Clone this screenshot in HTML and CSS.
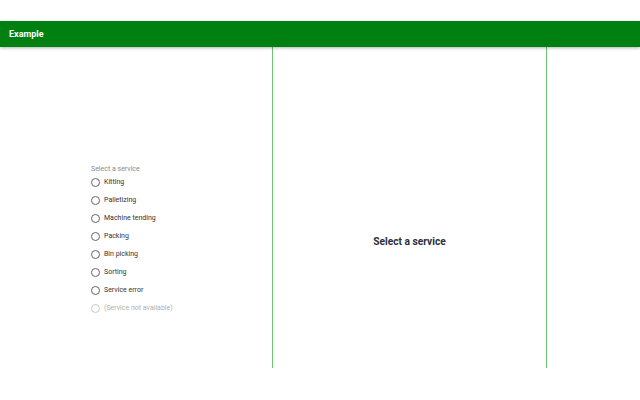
FILE: index.html
```html
<!DOCTYPE html>
<html>
<head>
<meta charset="utf-8">
<link rel="stylesheet" href="styles.css">
</head>
<body>
<div class="top-gap"></div>
<header class="appbar">Example</header>
<main class="panels">
  <section class="panel left">
    <div class="group">
      <div class="group-label">Select a service</div>
      <label class="opt"><span class="radio"></span>Kitting</label>
      <label class="opt"><span class="radio"></span>Palletizing</label>
      <label class="opt"><span class="radio"></span>Machine tending</label>
      <label class="opt"><span class="radio"></span>Packing</label>
      <label class="opt"><span class="radio"></span>Bin picking</label>
      <label class="opt"><span class="radio"></span>Sorting</label>
      <label class="opt"><span class="radio"></span>Service error</label>
      <label class="opt disabled"><span class="radio"></span>(Service not available)</label>
    </div>
  </section>
  <section class="panel middle">
    <div class="placeholder">Select a service</div>
  </section>
  <section class="panel right"></section>
</main>
</body>
</html>
```

FILE: styles.css
```css
html, body {
  margin: 0;
  padding: 0;
  background: #ffffff;
  font-family: Roboto, "Liberation Sans", sans-serif;
}
.top-gap {
  height: 21px;
}
.appbar {
  height: 26px;
  background: #008010;
  color: #ffffff;
  font-weight: 700;
  font-size: 9px;
  line-height: 26px;
  padding-left: 9px;
  box-shadow: 0 1px 3px rgba(0, 0, 0, 0.3);
  position: relative;
  z-index: 1;
}
.panels {
  display: flex;
  height: 321px;
}
.panel {
  box-sizing: border-box;
  height: 100%;
}
.left {
  width: 273px;
  border-right: 1px solid #70c274;
  padding-left: 91px;
  padding-top: 118px;
}
.middle {
  width: 274px;
  border-right: 1px solid #70c274;
  display: flex;
  justify-content: center;
  padding-top: 189px;
}
.right {
  flex: 1;
}
.group-label {
  font-size: 7px;
  color: #8a8a8a;
  line-height: 8px;
}
.opt {
  display: flex;
  align-items: center;
  height: 18px;
  font-size: 7px;
  color: #333333;
}
.radio {
  box-sizing: border-box;
  width: 9px;
  height: 9px;
  border: 1px solid #666666;
  border-radius: 50%;
  margin-right: 4px;
}
.opt.disabled {
  color: #b0b0b0;
}
.opt.disabled .radio {
  border-color: #c8c8c8;
}
.placeholder {
  font-weight: 700;
  font-size: 10.2px;
  color: #2a2f3a;
  line-height: 12px;
}
```
